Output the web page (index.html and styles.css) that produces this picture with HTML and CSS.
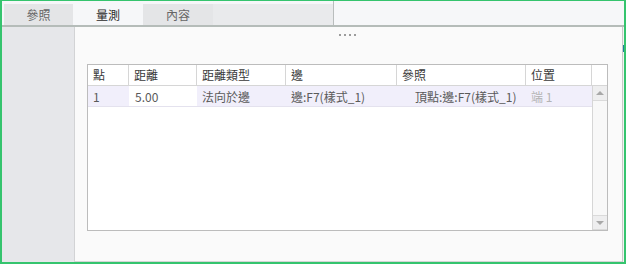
FILE: index.html
```html
<!DOCTYPE html>
<html>
<head>
<meta charset="utf-8">
<link rel="stylesheet" href="styles.css">
</head>
<body>
<div class="frame">
  <div class="tabbar">
    <div class="tabstrip">
      <div class="tab">參照</div>
      <div class="tab active">量測</div>
      <div class="tab">內容</div>
    </div>
  </div>
  <div class="content">
    <div class="side"></div>
    <div class="main">
      <div class="grip"><span></span><span></span><span></span><span></span></div>
      <div class="table">
        <div class="head">
          <div class="c">點</div>
          <div class="c">距離</div>
          <div class="c">距離類型</div>
          <div class="c">邊</div>
          <div class="c">參照</div>
          <div class="c">位置</div>
          <div class="c last"></div>
        </div>
        <div class="body">
          <div class="rows">
            <div class="row">
              <div class="c">1</div>
              <div class="c edit">5.00</div>
              <div class="c">法向於邊</div>
              <div class="c">邊:F7(樣式_1)</div>
              <div class="c ref">頂點:邊:F7(樣式_1)</div>
              <div class="c dim">端 1</div>
            </div>
          </div>
          <div class="scroll">
            <div class="sbtn"><span class="up"></span></div>
            <div class="track"></div>
            <div class="sbtn"><span class="down"></span></div>
          </div>
        </div>
      </div>
    </div>
    <div class="edge"><div class="mark"></div></div>
  </div>
</div>
</body>
</html>
```

FILE: styles.css
```css
html, body {
  margin: 0;
  padding: 0;
  width: 626px;
  height: 264px;
  overflow: hidden;
  background: #f7f8fa;
}
* { box-sizing: border-box; }
.frame {
  width: 626px;
  height: 264px;
  border-top: 1px solid #35c46e;
  border-left: 2px solid #35c46e;
  border-right: 2px solid #35c46e;
  border-bottom: 2px solid #35c46e;
  display: flex;
  flex-direction: column;
  font-family: "Noto Sans CJK TC", "Noto Sans", sans-serif;
  font-size: 12px;
}
.tabbar {
  height: 26px;
  background: #f6f7f9;
  border-bottom: 2px solid #b5bcb9;
  display: flex;
}
.tabstrip {
  width: 332px;
  border-right: 1px solid #b9bdbd;
  padding: 3px 0 0 2px;
  display: flex;
}
.tabstrip::after {
  content: "";
  flex: 1;
  background: #e9eaec;
}
.tab {
  width: 70px;
  height: 21px;
  background: #e4e5e7;
  color: #666;
  display: flex;
  align-items: center;
  justify-content: center;
  line-height: 21px;
}
.tab:first-child { width: 69px; }
.tab.active {
  background: #f6f7f9;
  color: #2a2a2a;
}
.content {
  flex: 1;
  display: flex;
  min-height: 0;
}
.side {
  width: 73px;
  background: #e6e7ea;
  border-right: 1px solid #d2d3d5;
}
.main {
  flex: 1;
  background: #fafafa;
  border-bottom: 1px solid #d5d5d5;
  padding: 0 14px 0 12px;
  display: flex;
  flex-direction: column;
}
.grip {
  height: 37px;
  display: flex;
  justify-content: center;
  gap: 3px;
  padding-top: 7px;
}
.grip span {
  width: 2px;
  height: 2px;
  background: #9c9c9c;
}
.table {
  width: 521px;
  height: 167px;
  border: 1px solid #bcbcbc;
  background: #fff;
  display: flex;
  flex-direction: column;
}
.head {
  display: grid;
  grid-template-columns: 41px 68px 89px 111px 129px 66px 15px;
  height: 21px;
  border-bottom: 1px solid #d6d6d6;
  color: #3a3a3a;
}
.c {
  border-right: 1px solid #d6d6d6;
  padding-left: 5px;
  line-height: 20px;
  white-space: nowrap;
  overflow: hidden;
}
.c.last { border-right: 0; }
.body {
  flex: 1;
  display: flex;
}
.rows {
  width: 504px;
}
.row {
  display: grid;
  grid-template-columns: 41px 68px 89px 111px 129px 66px;
  height: 21px;
  background: #f1effb;
  color: #5a5a5a;
  border-bottom: 1px solid #e4e2ee;
}
.row .c {
  border-right: 0;
  line-height: 21px;
}
.row .c.edit {
  background: #fff;
  padding-left: 6px;
}
.row .c.ref { padding-left: 18px; }
.row .c.dim { color: #b3b3b3; }
.scroll {
  width: 15px;
  border-left: 1px solid #d6d6d6;
  display: flex;
  flex-direction: column;
  background: #f8f8f8;
}
.sbtn {
  height: 15px;
  background: #eeeeef;
  border-top: 1px solid #dadada;
  border-bottom: 1px solid #dadada;
  display: flex;
  align-items: center;
  justify-content: center;
}
.sbtn:first-child { border-top: 0; }
.track { flex: 1; }
.up {
  width: 0; height: 0;
  border-left: 4px solid transparent;
  border-right: 4px solid transparent;
  border-bottom: 4px solid #a8a8a8;
}
.down {
  width: 0; height: 0;
  border-left: 4px solid transparent;
  border-right: 4px solid transparent;
  border-top: 4px solid #a8a8a8;
}
.edge {
  width: 2px;
  border-left: 1px solid #c9c9c9;
  background: #f2f2f2;
}
.mark {
  width: 1px;
  height: 7px;
  margin-top: 18px;
  background: #1c7f9a;
}
```
